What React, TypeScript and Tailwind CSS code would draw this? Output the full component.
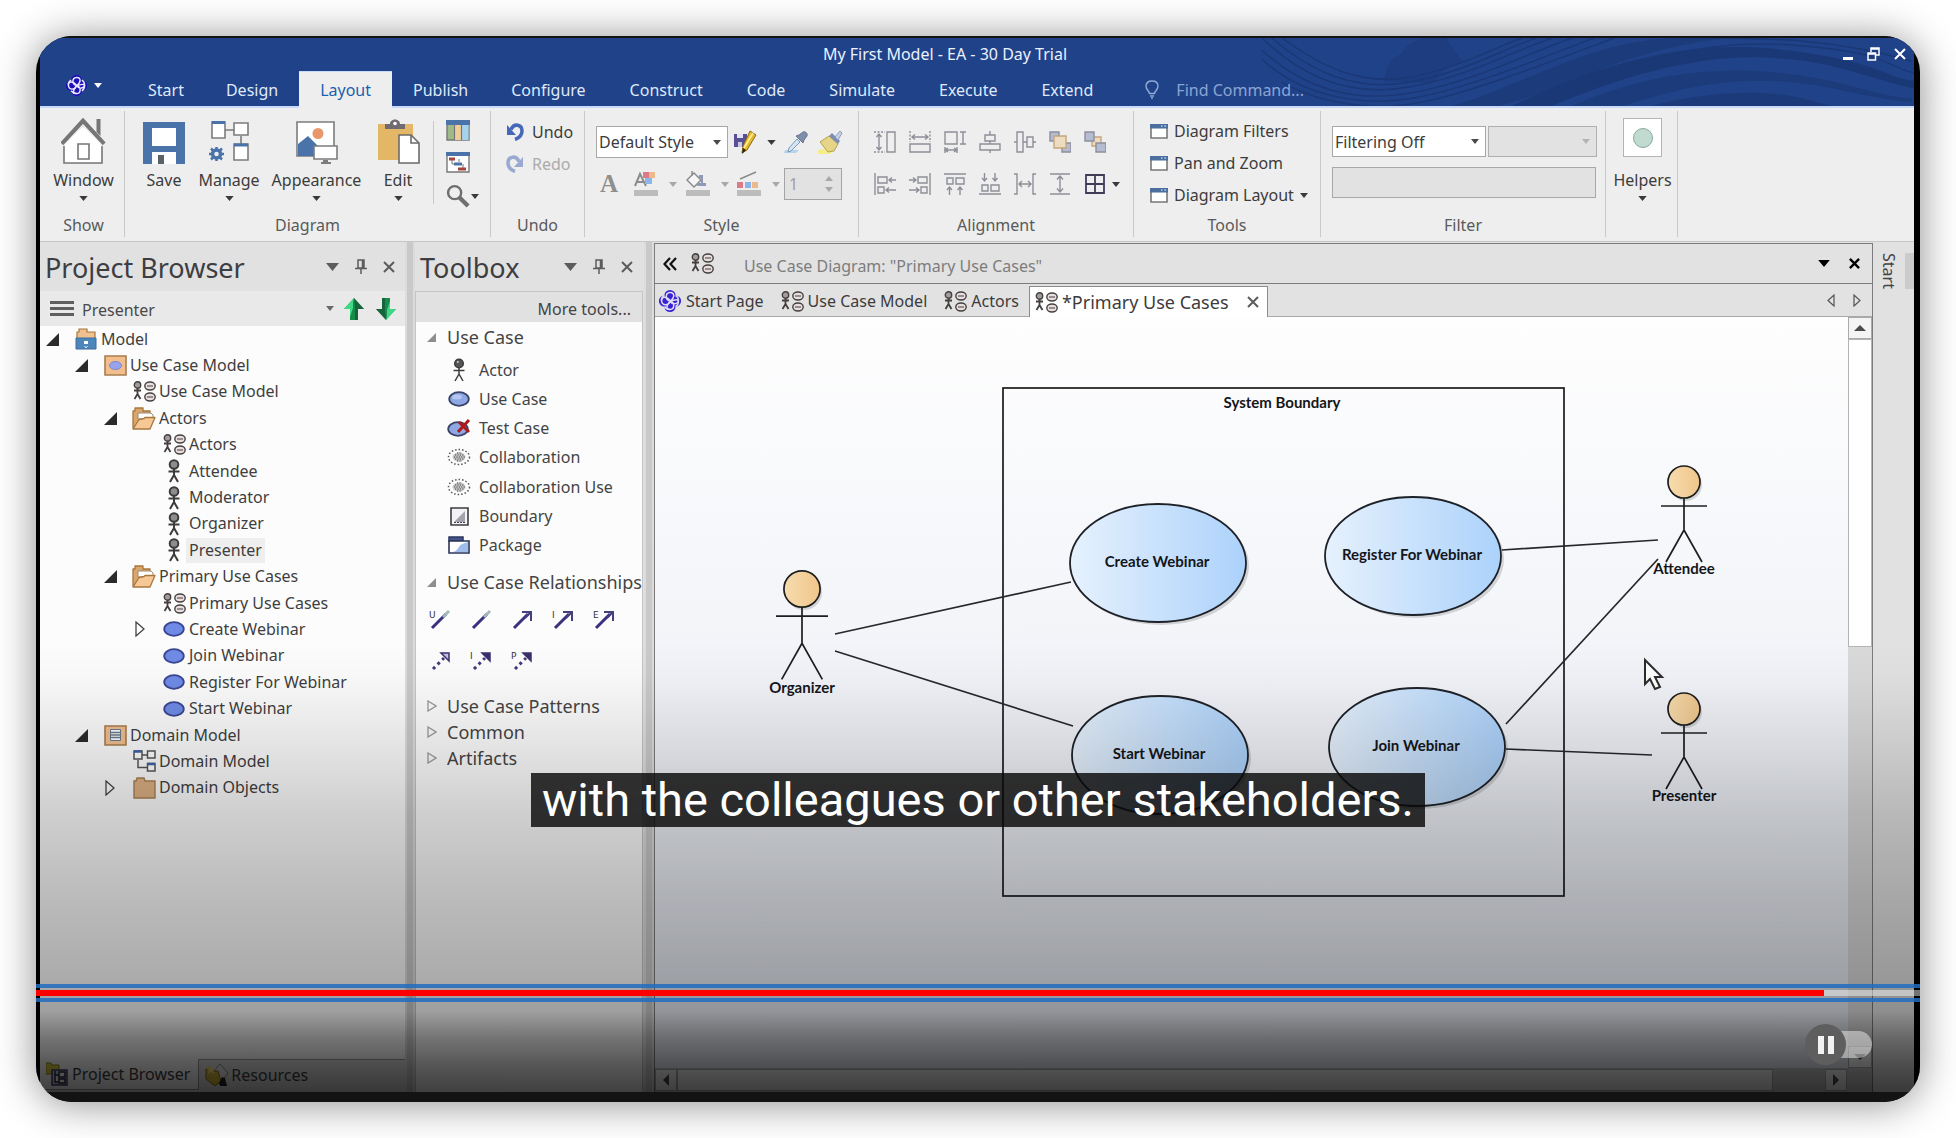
import React from 'react';

type Kids = { children?: React.ReactNode };

/* ---------- small shared glyphs ---------- */

const Caret = ({ className = 'text-[#3a3a3a]', w = 9 }: { className?: string; w?: number }) => (
  <svg width={w} height={Math.round(w * 0.6)} viewBox="0 0 10 6" className={`shrink-0 ${className}`}>
    <path d="M0 0h10L5 6z" fill="currentColor" />
  </svg>
);

const Pin = () => (
  <svg width="12" height="16" viewBox="0 0 12 16" fill="none" stroke="#5c5c5c" strokeWidth="1.5">
    <path d="M3 1h6v8H3zM7.5 1v8M0 9.5h12M6 10v5" />
  </svg>
);

const Cross = ({ size = 12, color = '#5c5c5c', width = 2 }: { size?: number; color?: string; width?: number }) => (
  <svg width={size} height={size} viewBox="0 0 12 12" stroke={color} strokeWidth={width}>
    <path d="M1 1l10 10M11 1L1 11" />
  </svg>
);

const Knot = ({ size, glow }: { size: number; glow?: boolean }) => (
  <svg width={size} height={size} viewBox="0 0 24 24" className="shrink-0">
    <g fill={glow ? '#1d10b8' : '#3a22d0'}>
      <circle cx="12" cy="6.5" r="5.6" />
      <circle cx="6.5" cy="12" r="5.6" />
      <circle cx="17.5" cy="12" r="5.6" />
      <circle cx="12" cy="17.5" r="5.6" />
      <circle cx="12" cy="12" r="7.5" />
    </g>
    <g fill="none" stroke={glow ? '#e8e6ff' : '#dcdcf4'} strokeWidth="1.5">
      <path d="M12 12C7 11 7 4 12 3.600S17 9 12 12c-1 5-8 5-8.400 0S9 7 12 12c5-1 8.400-2 8.400 0S15 17 12 12c-3 4-5 8.400 0 8.400S17 13 12 12" />
      <path d="M6.500 6.500C4 8 3 10 3.600 12M17.500 6.500c2 1 3 3 2.900 5.500M6.500 17.500c2 3 4 3 5.500 2.900M17.500 17.500c2-1 3-3 2.900-5.500" />
    </g>
  </svg>
);

const UseCaseDiagramIcon = () => (
  <svg width="23" height="21" viewBox="0 0 23 21" fill="none" stroke="#453f3f" strokeWidth="1.4" className="shrink-0">
    <circle cx="4.500" cy="4" r="3.200" fill="#a09c9c" />
    <path d="M4.500 7v6M1 9.500h7M4.500 13L1.500 18M4.500 13l3 5" strokeWidth="1.800" />
    <ellipse cx="17" cy="5" rx="5.200" ry="4" fill="#e9dede" />
    <ellipse cx="17" cy="16" rx="5.200" ry="4" fill="#e9dede" />
    <path d="M14 5h6M14 16h6" strokeWidth="1.200" />
  </svg>
);

const ActorIcon = ({ dark }: { dark?: boolean }) => (
  <svg width="14" height="24" viewBox="0 0 14 24" fill="none" stroke="#3c3c3c" strokeWidth={dark ? 1.5 : 2} className="shrink-0">
    <circle cx="7" cy="5.500" r="4.300" fill={dark ? '#555' : '#8d8d8d'} />
    {dark && <circle cx="5.800" cy="4" r="1" fill="#ccc" stroke="none" />}
    <path d="M7 10v6M1.500 12.500h11M7 16l-4 7M7 16l4 7" />
  </svg>
);

const Oval = ({ light }: { light?: boolean }) => (
  <svg width="22" height="16" viewBox="0 0 22 16" className="shrink-0">
    <ellipse cx="11" cy="8" rx="9.800" ry="6.800" fill={light ? '#8fa8e4' : '#6f8be6'} stroke={light ? '#3b4468' : '#3a4590'} strokeWidth="1.800" />
    {light && <ellipse cx="9" cy="6" rx="5" ry="2.500" fill="#b4c6f2" />}
  </svg>
);

const RootIcon = () => (
  <svg width="22" height="22" viewBox="0 0 22 22" className="shrink-0">
    <path d="M2 11V4h2V1h8v3h8v7z" fill="#efc18f" stroke="#a8773e" strokeWidth="1.200" />
    <path d="M1 10h20v11H1z" fill="#4d86ba" stroke="#3a6c9c" />
    <path d="M9 13h4v3H9z" fill="#fff" />
    <path d="M9.500 18l1.500 2 1.500-2" stroke="#dce9f5" fill="none" />
  </svg>
);

const ModelBox = ({ kind }: { kind: 'oval' | 'class' }) => (
  <svg width="23" height="21" viewBox="0 0 23 21" className="shrink-0">
    <path d="M1 1h21v19H1z" fill="#f2be8e" stroke="#a87d50" strokeWidth="1.600" />
    {kind === 'oval' ? (
      <ellipse cx="11.500" cy="10.500" rx="6" ry="4" fill="#97a3ec" stroke="#7c87cf" />
    ) : (
      <g stroke="#6a7b8c" fill="#fff">
        <path d="M6.500 4.500h10v11h-10z" />
        <path d="M6.500 7.500h10M6.500 10h10M6.500 12.500h10" strokeWidth="1.400" />
      </g>
    )}
  </svg>
);

const OpenFolder = () => (
  <svg width="24" height="23" viewBox="0 0 24 23" strokeLinejoin="round" className="shrink-0">
    <path d="M1 21V4h2V1h8v3h7v6L14 21z" fill="#dba66c" stroke="#a8773e" strokeWidth="1.300" />
    <path d="M6 6h13l2 2v4H6z" fill="#fff" stroke="#9b8a74" />
    <path d="M1 22L7 12.500l5-1 1-1h10L18 22z" fill="#f5c896" stroke="#a8773e" strokeWidth="1.300" />
  </svg>
);

const ClosedFolder = () => (
  <svg width="23" height="22" viewBox="0 0 23 22" className="shrink-0">
    <path d="M1 21V4h2l1-3h7l1 3h10v17z" fill="#dcb083" stroke="#a88052" strokeWidth="1.400" />
  </svg>
);

const ClassDiagram = () => (
  <svg width="23" height="22" viewBox="0 0 23 22" fill="#fff" stroke="#555" strokeWidth="1.500" className="shrink-0">
    <path d="M8 5h6M5 10v7.500h9" fill="none" />
    <path d="M1 1h8v8H1zM14.500 1h7.500v7h-7.500zM14.500 13.500h7.500v7.500h-7.500z" />
    <path d="M1 1.500h8M14.500 14h7.500" stroke="#3f62a8" strokeWidth="2.500" />
  </svg>
);

/* ---------- title bar ---------- */

const ribbonTabs = ['Start', 'Design', 'Layout', 'Publish', 'Configure', 'Construct', 'Code', 'Simulate', 'Execute', 'Extend'];

const Waves = () => (
  <svg className="pointer-events-none absolute top-0 right-0 h-full w-[652px]" viewBox="0 0 652 70" preserveAspectRatio="none" fill="none" stroke="#1b3876">
    <path d="M122 45C124 28 130 20 140 16C146 4 158 0 166 0h18c6 8 10 18 18 24l-14 4c-10 4-8 12-18 18z" fill="#1d3d80" stroke="none" />
    <g strokeWidth="1.500">
      <path d="M0 0C40 40 90 62 150 50S250 14 290 0" />
      <path d="M10 0C50 36 95 56 150 45S240 12 274 0" />
      <path d="M-5 8C40 52 90 68 152 56S270 14 310 0" />
      <path d="M20 0C60 30 100 50 150 40S236 8 260 0" />
      <path d="M0 22C40 60 100 72 156 61S290 16 332 0" />
      <path d="M20 46C60 68 110 76 160 66S300 20 352 0" />
    </g>
    <path d="M190 70C260 50 330 0 420 0L470 0C360 10 300 56 236 70z" fill="#1c3b7b" stroke="none" />
    <path d="M250 70C330 30 420 0 520 12S620 40 652 44v8C600 40 570 22 500 20S360 40 290 70z" fill="#1b3876" stroke="none" />
    <path d="M310 70C380 38 450 28 520 36s90 24 130 26v4c-60-6-90-22-150-22S400 58 360 70z" fill="#1c3b7b" stroke="none" />
    <path d="M390 70c50-14 110-18 150-8l30 8z" fill="#1c3a79" stroke="none" />
    <path d="M300 64C370 20 450 0 540 8s80 20 112 28M420 0c90 0 150 0 230 24" strokeWidth="1.500" />
  </svg>
);

const TitleBar = () => (
  <header className="relative border-b-2 border-[#c8dafa] bg-[#204289] text-[#dfe9fb]">
    <Waves />
    <div className="relative flex h-[33px] items-center">
      <div className="flex-1" />
      <h1 className="pb-[2px] text-[16px] text-[#eaf1ff]">My First Model - EA - 30 Day Trial</h1>
      <div className="mr-16 flex-1" />
      <div className="absolute right-2 flex items-center gap-[14px] pb-[2px]">
        <button aria-label="Minimize" className="flex h-5 w-[10px] items-end pb-1"><span className="block h-[3px] w-[10px] bg-white" /></button>
        <button aria-label="Restore">
          <svg width="13" height="14" viewBox="0 0 13 14" fill="none" stroke="#fff" strokeWidth="1.500">
            <path d="M4 5V1h8v7H9M4 2h8" /><path d="M1 6h7.500v7H1zM1 7h7.500" />
          </svg>
        </button>
        <button aria-label="Close"><Cross color="#fff" width={2} /></button>
      </div>
    </div>
    <nav className="relative flex h-[35px] items-center text-[16px]">
      <button aria-label="Application menu" className="flex w-[87px] items-center gap-[6px] pb-[6px] pl-[25px]">
        <Knot size={23} glow />
        <Caret className="text-white" w={8} />
      </button>
      {ribbonTabs.map((t, i) => (
        <button
          key={t}
          className={t === 'Layout'
            ? '-mb-[2px] h-[37px] border-t border-[#c8dafa] bg-[#eeeeee] px-[21px] text-[#1b5fae]'
            : `h-full pt-[2px] ${i > 3 ? 'px-[22px]' : 'px-[21px]'}`}
        >
          {t}
        </button>
      ))}
      <label className="ml-[30px] flex items-center gap-[17px] pt-[2px]">
        <svg width="14" height="19" viewBox="0 0 14 19" fill="none" stroke="#8fa9d6" strokeWidth="1.400">
          <path d="M4.500 13.500c0-2-3.500-4-3.500-7.300C1 3 3.500 1 7 1s6 2 6 5.200c0 3.300-3.500 5.300-3.500 7.300zM5 16h4M6 18h2" />
        </svg>
        <input aria-label="Find Command" placeholder="Find Command..." className="w-40 bg-transparent outline-none placeholder:text-[#8da5d2]" />
      </label>
    </nav>
  </header>
);

/* ---------- ribbon ---------- */

const Group = ({ label, className = '', children }: Kids & { label: string; className?: string }) => (
  <section className={`flex shrink-0 flex-col border-r border-[#c9c9c9] ${className}`}>
    <div className="flex-1">{children}</div>
    <h2 className="h-[23px] text-center text-[16px] leading-[22px] text-[#5a5a5a]">{label}</h2>
  </section>
);

const BigButton = ({ label, caret = true, className = '', children }: Kids & { label: string; caret?: boolean; className?: string }) => (
  <button className={`flex flex-col items-center pt-[7px] ${className}`}>
    <span className="flex h-[46px] items-end justify-center">{children}</span>
    <span className="mt-1 h-6 text-[16px] leading-6 text-[#3c3c3c]">{label}</span>
    <span className="flex h-3 items-center">{caret && <Caret />}</span>
  </button>
);

const House = () => (
  <svg width="46" height="46" viewBox="0 0 46 46">
    <path d="M3 26L22 7l19 19v19H3z" fill="#fff" stroke="#767676" strokeWidth="1.600" />
    <path d="M35.500 1h4v17l-4-4z" fill="#767676" />
    <path d="M1 26L22 3l21 23" fill="none" stroke="#767676" strokeWidth="4.500" />
    <path d="M2.500 28L22 7l19.500 21" fill="none" stroke="#f4f4f4" strokeWidth="1.500" />
    <path d="M17 26h11v15H17z" fill="#fff" stroke="#767676" strokeWidth="1.600" />
  </svg>
);
const SaveIcon = () => (
  <svg width="42" height="42" viewBox="0 0 42 42">
    <path d="M0 0h42v42H0z" fill="#4a74a9" />
    <path d="M9 6h24v18H9zM9 30h24v12H9z" fill="#fff" />
    <path d="M15 33h6v9h-6z" fill="#5a6268" />
  </svg>
);
const ManageIcon = () => (
  <svg width="42" height="44" viewBox="0 0 42 44" fill="#fff" stroke="#7c7c7c" strokeWidth="1.600">
    <path d="M16 10h10M33 16v8" fill="none" />
    <path d="M4 2h13v16H4zM26 3h14v12H26zM26 24h14v16H26z" />
    <path d="M4 2.500h13M26 25h14" stroke="#4a74a9" strokeWidth="3" />
    <circle cx="8.500" cy="34" r="4" stroke="#4a74a9" strokeWidth="3.500" fill="#eee" />
    <path d="M8.500 27v3M8.500 38v3M1 34h3M13 34h3M3 28.500l2.500 2.500M11.500 37l2.500 2.500M14 28.500L11.500 31M5.500 37L3 39.500" stroke="#4a74a9" strokeWidth="2.500" />
  </svg>
);
const AppearanceIcon = () => (
  <svg width="42" height="44" viewBox="0 0 42 44">
    <path d="M1 2h37v34H1z" fill="#fff" stroke="#7c7c7c" strokeWidth="1.600" />
    <circle cx="22" cy="13.500" r="5.500" fill="#e8976a" />
    <path d="M2 24l10-8 10 10v10H2z" fill="#4a74a9" />
    <path d="M18 26h23v13H18z" fill="#fff" stroke="#7c7c7c" strokeWidth="1.600" />
    <path d="M27 40h5v2h3v2H25v-2h2z" fill="#7c7c7c" />
  </svg>
);
const EditIcon = () => (
  <svg width="43" height="46" viewBox="0 0 43 46">
    <path d="M1 6h35v36H1z" fill="#e4b766" />
    <path d="M8 11V6h5c0-6 10-6 10 0h5v5z" fill="#6f6b70" />
    <circle cx="18" cy="5.500" r="1.800" fill="#fff" />
    <path d="M22 17h12l8 8v20H22z" fill="#fff" stroke="#6a6a6a" strokeWidth="1.600" />
    <path d="M34 17v8h8" fill="none" stroke="#6a6a6a" strokeWidth="1.600" />
  </svg>
);
const GridIcon = () => (
  <svg width="24" height="21" viewBox="0 0 24 21">
    <path d="M1 1h22v19H1z" fill="#9fb98a" stroke="#777" strokeWidth="1.400" />
    <path d="M8.500 5h7v15h-7z" fill="#f0cd98" /><path d="M15.500 5h7v15h-7z" fill="#a4d3ee" />
    <path d="M8.500 5v15M15.500 5v15" stroke="#777" strokeWidth="1.200" />
    <path d="M0 0h24v5H0z" fill="#4a74a9" />
  </svg>
);
const ChartIcon = () => (
  <svg width="24" height="21" viewBox="0 0 24 21">
    <path d="M1 1h22v19H1z" fill="#fff" stroke="#777" strokeWidth="1.400" />
    <path d="M0 0h24v4H0z" fill="#4a74a9" />
    <path d="M3 7h6M12 17h8" stroke="#a8443c" strokeWidth="3" /><path d="M8 12h8" stroke="#4a74a9" strokeWidth="3" />
    <path d="M6 8v4h3M13 10v-3M17 12v4" stroke="#777" fill="none" />
  </svg>
);
const UndoIcon = ({ flip }: { flip?: boolean }) => (
  <svg width="18" height="18" viewBox="0 0 18 18" className={flip ? '-scale-x-100 opacity-50' : ''}>
    <path d="M5 6.500C8 0 16 1 16 8c0 5-3 7-7 8.500" fill="none" stroke="#4668b8" strokeWidth="3.500" />
    <path d="M1 2v10h9z" fill="#4668b8" />
  </svg>
);

const StylePencil = () => (
  <svg width="23" height="24" viewBox="0 0 23 24">
    <path d="M0 4h13v13H0z" fill="#575095" /><path d="M3 4h6v4H3z" fill="#e4e2f4" /><path d="M4 12h4v5H4z" fill="#c9c6e6" />
    <path d="M16 1l6 4-9 15-5 3 1-7z" fill="#e5b82e" stroke="#8a6a14" />
    <path d="M19 3L10 18" stroke="#fdf0a0" strokeWidth="1.500" /><path d="M9 18l3 2-4 4z" fill="#2c2414" />
  </svg>
);
const Dropper = () => (
  <svg width="24" height="22" viewBox="0 0 24 22">
    <path d="M1 19h14l-3 3H0z" fill="#b4d3ec" />
    <path d="M13 8l3 3-9 9-3 1 1-4z" fill="#d4e6f5" stroke="#7b99b6" />
    <path d="M12 5l7 7 1-3 3-4c1-3-2-5-4-4l-4 3z" fill="#7d8fab" stroke="#66768e" />
  </svg>
);
const Brush = () => (
  <svg width="25" height="24" viewBox="0 0 25 24">
    <path d="M0 20l10-2 6 2-4 4H0z" fill="#f2ee8c" />
    <path d="M2 12l9-6 9 8-4 7-6 1z" fill="#e6d588" stroke="#b8a24a" /><path d="M11 6l3-3 8 8-2 3z" fill="#7b8fb4" />
    <path d="M17 7l5-6 2 2-4 7z" fill="#c6d1e8" stroke="#8e9cbc" />
  </svg>
);
const ColorA = () => (
  <svg width="24" height="26" viewBox="0 0 24 26">
    <path d="M1 15L6 3l6 12M3 11h7" fill="none" stroke="#8c8c8c" strokeWidth="2" />
    <path d="M9 1h6v6H9z" fill="#dd7a88" /><path d="M15 1h6v6h-6z" fill="#ecb98c" /><path d="M11 7h7v6h-7z" fill="#8cb6e8" />
    <path d="M0 19h24v6H0z" fill="#bcbcbc" />
  </svg>
);
const Bucket = () => (
  <svg width="24" height="26" viewBox="0 0 24 26">
    <path d="M1 9l7-7 7 7-7 7zM6 0v5" fill="#f6f6f6" stroke="#8c8c8c" strokeWidth="1.500" />
    <path d="M13 4h4v8h3v3h-9v-3h4V7h-2z" fill="#8c9bb8" /><path d="M0 19h24v6H0z" fill="#bcbcbc" />
  </svg>
);
const LineColor = () => (
  <svg width="24" height="26" viewBox="0 0 24 26">
    <path d="M3 8L19 1" stroke="#8c8c8c" strokeWidth="1.500" />
    <path d="M0 11h6v6H0z" fill="#dd7a88" /><path d="M8 11h6v6H8z" fill="#8cb6e8" /><path d="M15 11h6v6h-6z" fill="#ecb98c" />
    <path d="M0 19h24v6H0z" fill="#bcbcbc" />
  </svg>
);

const alignPaths: { name: string; d: string; dash?: string; fill?: React.ReactNode }[] = [
  { name: 'Same height', d: 'M13 1h8v20h-8zM5 3v16M2.500 6L5 3l2.500 3M2.500 16L5 19l2.500-3', dash: 'M0 1h11M0 21h11' },
  { name: 'Same width', d: 'M1 13h20v8H1zM3 6h16M6 3.500L3 6l3 2.500M16 3.500L19 6l-3 2.500', dash: 'M1 0v11M21 0v11' },
  { name: 'Same size', d: 'M1 1h12v12H1zM16 1h6M16 13h6M19 1v12M1 16v6M13 16v6M1 19h12M4 17l-3 2 3 2M10 17l3 2-3 2' },
  { name: 'Center vertical', d: 'M6 4h10v6H6zM1 13h20v6H1zM11 0v4M11 10v3M11 19v3' },
  { name: 'Center horizontal', d: 'M3 1h6v20H3zM13 6h6v10h-6zM0 11h3M9 11h4M19 11h3' },
  { name: 'Bring forward', d: '', fill: <g stroke="#8e8e9c" fill="#b4bcd2"><path d="M1 1h9v9H1zM13 12h9v9h-9z" /><path d="M5 5h12v12H5z" fill="#eddcc0" stroke="#c4a77c" /></g> },
  { name: 'Send back', d: '', fill: <g stroke="#8e8e9c" fill="#b4bcd2"><path d="M8 6h9v9H8z" fill="#eddcc0" stroke="#c4a77c" /><path d="M1 1h9v9H1zM12 12h10v9H12z" /></g> },
  { name: 'Align left', d: 'M1 0v22M4 4h9v6H4zM4 14h6v6H4zM15 7h7M18 4.500L15 7l3 2.500M12 17h10M15 14.500L12 17l3 2.500' },
  { name: 'Align right', d: 'M21 0v22M9 4h9v6H9zM12 14h6v6h-6zM0 7h7M4 4.500L7 7l-3 2.500M0 17h10M7 14.500l3 2.500-3 2.500' },
  { name: 'Align top', d: 'M0 1h22M3 5h6v6H3zM12 5h8v6h-8zM5.500 14v8M3 17l2.500-3L8 17M16 14v8M13.500 17l2.500-3 2.500 3' },
  { name: 'Align bottom', d: 'M0 21h22M3 12h6v6H3zM12 12h8v6h-8zM5.500 0v8M3 5l2.500 3L8 5M16 0v8M13.500 5L16 8l2.500-3' },
  { name: 'Space across', d: 'M0 1h3v20H0M22 1h-3v20h3M5 11h12M8 8l-3 3 3 3M14 8l3 3-3 3' },
  { name: 'Space down', d: 'M1 1h20M1 21h20M11 3v16M8 6.500L11 3l3 3.500M8 15.500L11 19l3-3.500' },
];

const AlignButton = ({ i }: { i: number }) => {
  const a = alignPaths[i];
  return (
    <button aria-label={a.name} className="flex w-[35px] justify-center">
      <svg width="22" height="22" viewBox="0 0 22 22" fill="none" stroke="#8e8e98" strokeWidth="1.400">
        <path d={a.d} />
        {a.dash && <path d={a.dash} strokeDasharray="2 1.500" />}
        {a.fill}
      </svg>
    </button>
  );
};

const WindowIcon = () => (
  <svg width="18" height="15" viewBox="0 0 18 15">
    <path d="M1 1h16v13H1z" fill="#fff" stroke="#777" strokeWidth="1.600" />
    <path d="M0 0h18v4.500H0z" fill="#4a6f9f" /><path d="M11 2h1.500M14.500 2H16" stroke="#fff" />
  </svg>
);

const Select = ({ label, value, className, disabled }: { label: string; value: string; className: string; disabled?: boolean }) => (
  <div className={`relative flex items-center border text-[16px] ${className} ${disabled ? 'border-[#b0b0b0] bg-[#e2e2e2]' : 'border-[#a8a8a8] bg-white'}`}>
    <select aria-label={label} disabled={disabled} className="h-full w-full appearance-none bg-transparent pl-[2px] text-[#3c3c3c] outline-none">
      <option>{value}</option>
    </select>
    <span className="pointer-events-none absolute right-[6px]"><Caret w={8} className={disabled ? 'text-[#b4b4b4]' : 'text-[#4a4a4a]'} /></span>
  </div>
);

const Ribbon = () => (
  <div className="flex h-[134px] border-b border-[#c6c6c6] bg-[#eeeeee] pt-[3px] pb-1">
    <Group label="Show" className="w-[85px] pl-[3px]">
      <BigButton label="Window" className="mx-auto"><House /></BigButton>
    </Group>
    <Group label="Diagram" className="w-[366px]">
      <div className="flex pl-[14px]">
        <BigButton label="Save" caret={false} className="w-[50px]"><SaveIcon /></BigButton>
        <BigButton label="Manage" className="ml-2 w-16"><ManageIcon /></BigButton>
        <BigButton label="Appearance" className="ml-2 w-[95px]"><AppearanceIcon /></BigButton>
        <BigButton label="Edit" className="ml-[6px] w-14"><EditIcon /></BigButton>
        <div className="mt-[10px] ml-[7px] h-[83px] border-l border-[#c9c9c9]" />
        <div className="ml-3 flex flex-col gap-[11px] pt-[9px]">
          <button aria-label="Diagram grid"><GridIcon /></button>
          <button aria-label="Gantt view"><ChartIcon /></button>
          <button aria-label="Zoom" className="flex items-center gap-[1px]">
            <svg width="24" height="24" viewBox="0 0 25 25" fill="none" stroke="#6e6e6e">
              <circle cx="9" cy="9" r="6.800" strokeWidth="2.500" /><path d="M14 14l9 9" strokeWidth="4.500" />
            </svg>
            <Caret w={8} />
          </button>
        </div>
      </div>
    </Group>
    <Group label="Undo" className="w-[94px]">
      <div className="flex flex-col gap-2 pt-[9px] pl-[15px] text-[16px] leading-6">
        <button className="flex items-center gap-2 text-[#3c3c3c]"><UndoIcon />Undo</button>
        <button disabled className="flex items-center gap-2 text-[#ababab]"><UndoIcon flip />Redo</button>
      </div>
    </Group>
    <Group label="Style" className="w-[274px]">
      <div className="flex items-center pt-[15px] pl-[11px]">
        <Select label="Diagram style" value="Default Style" className="h-8 w-[132px]" />
        <button aria-label="Save style" className="ml-[6px] flex items-center gap-[10px]"><StylePencil /><Caret /></button>
        <button aria-label="Pick style" className="ml-2"><Dropper /></button>
        <button aria-label="Apply style" className="ml-[10px]"><Brush /></button>
      </div>
      <div className="mt-[10px] flex items-center pl-[14px]">
        <button aria-label="Font" className="w-5 font-['Liberation_Serif'] text-[25px] leading-8 font-bold text-[#8e8e8e]">A</button>
        <button aria-label="Font color" className="ml-[15px] flex items-center gap-[11px]"><ColorA /><Caret w={8} className="text-[#a8a8a8]" /></button>
        <button aria-label="Fill color" className="ml-[9px] flex items-center gap-[11px]"><Bucket /><Caret w={8} className="text-[#a8a8a8]" /></button>
        <button aria-label="Line color" className="ml-[8px] flex items-center gap-[11px]"><LineColor /><Caret w={8} className="text-[#a8a8a8]" /></button>
        <div className="ml-1 flex h-8 w-[58px] items-center justify-between border border-[#a4a4a4] bg-[#e2e2e2] pr-2 pl-1">
          <input aria-label="Line width" disabled defaultValue="1" className="w-5 bg-transparent text-[16px] text-[#a0a0a0]" />
          <span className="flex flex-col gap-[6px]"><Caret w={8} className="rotate-180 text-[#a8a8a8]" /><Caret w={8} className="text-[#a8a8a8]" /></span>
        </div>
      </div>
    </Group>
    <Group label="Alignment" className="w-[275px]">
      <div className="flex pt-5 pl-2">{[0, 1, 2, 3, 4, 5, 6].map((i) => <AlignButton key={i} i={i} />)}</div>
      <div className="mt-5 flex items-center pl-2">
        {[7, 8, 9, 10, 11, 12].map((i) => <AlignButton key={i} i={i} />)}
        <button aria-label="Auto layout" className="flex items-center gap-[7px] pl-2">
          <svg width="20" height="20" viewBox="0 0 20 20" fill="none" stroke="#3f3c58" strokeWidth="1.800"><path d="M1 1h18v18H1zM10 1v18M1 10h18" /></svg>
          <Caret w={8} />
        </button>
      </div>
    </Group>
    <Group label="Tools" className="w-[187px]">
      <div className="flex flex-col gap-2 pt-2 pl-[16px] text-[16px] leading-6 text-[#3c3c3c]">
        <button className="flex items-center gap-[6px]"><WindowIcon />Diagram Filters</button>
        <button className="flex items-center gap-[6px]"><WindowIcon />Pan and Zoom</button>
        <button className="flex items-center gap-[6px]"><WindowIcon />Diagram Layout<Caret w={8} /></button>
      </div>
    </Group>
    <Group label="Filter" className="w-[285px]">
      <div className="flex gap-[2px] pt-[15px] pl-[11px]">
        <Select label="Filtering" value="Filtering Off" className="h-[31px] w-[154px]" />
        <Select label="Filter set" value="" disabled className="h-[31px] w-[109px]" />
      </div>
      <input aria-label="Filter text" disabled className="mt-[10px] ml-[11px] h-[31px] w-[264px] border border-[#a8a8a8] bg-[#e2e2e2]" />
    </Group>
    <Group label="" className="w-[72px] pl-[2px]">
      <BigButton label="Helpers" className="mx-auto">
        <span className="mb-[7px] flex h-[39px] w-[39px] items-center justify-center border border-[#b4b4b4] bg-white">
          <span className="h-5 w-5 rounded-full border border-[#8aa79c] bg-[#c2dbd1]" />
        </span>
      </BigButton>
    </Group>
  </div>
);

/* ---------- docked panels ---------- */

const PanelHead = ({ title }: { title: string }) => (
  <div className="flex h-[49px] shrink-0 items-center bg-[#e1e1e1] pr-[10px] pl-[5px]">
    <h2 className="flex-1 pt-[3px] text-[27px] text-[#3d3d42]">{title}</h2>
    <div className="flex items-center gap-4 pt-px">
      <button aria-label={`${title} options`}><Caret w={13} className="text-[#5c5c5c]" /></button>
      <button aria-label={`Pin ${title}`}><Pin /></button>
      <button aria-label={`Close ${title}`}><Cross size={12} /></button>
    </div>
  </div>
);

const Arrow = ({ down }: { down?: boolean }) => (
  <svg width="20" height="22" viewBox="0 0 20 22" className={down ? 'rotate-180' : ''}>
    <path d="M10 0l10 11h-6v11H6V11H0z" fill="#168c4a" />
    <path d="M10 0L0 11h6v8l3-9V4z" fill="#3ed886" />
    <path d="M10 0l10 11h-6v11h-3V8z" fill="#174a34" opacity=".6" />
  </svg>
);

type Node = { level: 0 | 1 | 2 | 3; text: string; icon: React.ReactNode; state?: 'open' | 'closed'; selected?: boolean };

const tree: Node[] = [
  { level: 0, text: 'Model', icon: <RootIcon />, state: 'open' },
  { level: 1, text: 'Use Case Model', icon: <ModelBox kind="oval" />, state: 'open' },
  { level: 2, text: 'Use Case Model', icon: <UseCaseDiagramIcon /> },
  { level: 2, text: 'Actors', icon: <OpenFolder />, state: 'open' },
  { level: 3, text: 'Actors', icon: <UseCaseDiagramIcon /> },
  { level: 3, text: 'Attendee', icon: <ActorIcon /> },
  { level: 3, text: 'Moderator', icon: <ActorIcon /> },
  { level: 3, text: 'Organizer', icon: <ActorIcon /> },
  { level: 3, text: 'Presenter', icon: <ActorIcon />, selected: true },
  { level: 2, text: 'Primary Use Cases', icon: <OpenFolder />, state: 'open' },
  { level: 3, text: 'Primary Use Cases', icon: <UseCaseDiagramIcon /> },
  { level: 3, text: 'Create Webinar', icon: <Oval />, state: 'closed' },
  { level: 3, text: 'Join Webinar', icon: <Oval /> },
  { level: 3, text: 'Register For Webinar', icon: <Oval /> },
  { level: 3, text: 'Start Webinar', icon: <Oval /> },
  { level: 1, text: 'Domain Model', icon: <ModelBox kind="class" />, state: 'open' },
  { level: 2, text: 'Domain Model', icon: <ClassDiagram /> },
  { level: 2, text: 'Domain Objects', icon: <ClosedFolder />, state: 'closed' },
];

const indent = ['pl-0', 'pl-[29px]', 'pl-[58px]', 'pl-[88px]'];

const Twisty = ({ state }: { state?: 'open' | 'closed' }) => (
  <span className="flex w-6 shrink-0 justify-center">
    {state === 'open' && <svg width="13" height="13" viewBox="0 0 13 13"><path d="M13 0v13H0z" fill="#2b2b2b" /></svg>}
    {state === 'closed' && <svg width="10" height="16" viewBox="0 0 10 16"><path d="M1 1l8 7-8 7z" fill="#fff" stroke="#444" strokeWidth="1.300" /></svg>}
  </span>
);

const ProjectBrowser = () => (
  <aside className="flex w-[365px] shrink-0 flex-col bg-[#fcfcfc]">
    <PanelHead title="Project Browser" />
    <div className="flex h-[35px] shrink-0 items-center bg-[#e9e9e9] pr-[9px] pl-[10px] text-[16px] text-[#4a4a4a]">
      <button aria-label="Browser menu" className="flex flex-col gap-[3px]">
        <span className="block h-[3px] w-6 bg-[#5f5f5f]" /><span className="block h-[3px] w-6 bg-[#5f5f5f]" /><span className="block h-[3px] w-6 bg-[#5f5f5f]" />
      </button>
      <span className="flex-1 pt-[2px] pl-2">Presenter</span>
      <button aria-label="Select context"><Caret w={8} className="text-[#6a6a6a]" /></button>
      <button aria-label="Move up" className="ml-[10px]"><Arrow /></button>
      <button aria-label="Move down" className="ml-3"><Arrow down /></button>
    </div>
    <ul className="flex h-[475px] shrink-0 flex-col text-[16px] text-[#3f3f3f]">
      {tree.map((n, i) => (
        <li key={i} className={`flex min-h-0 flex-1 items-center ${indent[n.level]}`}>
          <Twisty state={n.state} />
          <span className="ml-[10px] flex w-6 shrink-0 justify-center">{n.icon}</span>
          <button className={`px-[3px] leading-[25px] ${n.selected ? 'bg-[#eeeeee]' : ''}`}>{n.text}</button>
        </li>
      ))}
    </ul>
    <div className="flex-1" />
    <div className="flex h-[33px] shrink-0 bg-[#dedede] pb-[2px] text-[16px] text-[#3c3c3c]">
      <button className="flex items-center gap-1 border-r border-b border-[#999] bg-[#fcfcfc] pr-2 pl-[6px]">
        <svg width="22" height="24" viewBox="0 0 22 24">
          <path d="M0 1h5l1 2h7v9H0z" fill="#d8cc3c" stroke="#8c8424" />
          <path d="M6 8h15v15H6z" fill="#c4c6dc" stroke="#3c3e66" strokeWidth="1.500" />
          <path d="M9 9v11h4M9 13h4M13 10h6v5h-6zM13 17h6v4h-6z" fill="#fff" stroke="#26263c" strokeWidth="1.500" />
        </svg>
        Project Browser
      </button>
      <button className="flex flex-1 items-center gap-[2px] border-t border-[#999] pl-[6px]">
        <svg width="24" height="24" viewBox="0 0 24 24">
          <path d="M9 8l6-7 8 9-7 9z" fill="#e8e8f0" stroke="#888" />
          <path d="M1 6l4-2 3 4h5l3 10-6 5-9-7z" fill="#d8b83c" stroke="#8a7020" />
          <path d="M6 2l1 4 4-1-3 3 2 3-4-2-3 2 1-4-3-2 4-1z" fill="#ffe978" />
          <path d="M14 20l3-6 3 1 2 8h-7z" fill="#222" />
        </svg>
        Resources
      </button>
    </div>
  </aside>
);

const StippledOval = () => (
  <svg width="24" height="18" viewBox="0 0 24 18">
    <ellipse cx="12" cy="9" rx="10.500" ry="7.500" fill="none" stroke="#555" strokeWidth="1.500" strokeDasharray="1.500 2" />
    <ellipse cx="12" cy="9" rx="6.500" ry="4.500" fill="#c8c8c8" />
    <g stroke="#444" strokeWidth="1.200" strokeDasharray="1.200 1.200"><path d="M8 7h9M7 9h11M8 11h9M10 13h5M10 5h5" /></g>
  </svg>
);

const tools = [
  { name: 'Actor', icon: <ActorIcon dark /> },
  { name: 'Use Case', icon: <Oval light /> },
  { name: 'Test Case', icon: (
    <svg width="24" height="18" viewBox="0 0 24 18">
      <ellipse cx="11" cy="10" rx="9.800" ry="6.800" fill="#8fa8e4" stroke="#3b4468" strokeWidth="1.800" />
      <path d="M12 3l10 10M22 1L11 13" stroke="#b01818" strokeWidth="3" />
    </svg>) },
  { name: 'Collaboration', icon: <StippledOval /> },
  { name: 'Collaboration Use', icon: <StippledOval /> },
  { name: 'Boundary', icon: (
    <svg width="19" height="19" viewBox="0 0 19 19">
      <path d="M1 1h17v17H1z" fill="#f2f2f8" stroke="#3c3c3c" strokeWidth="1.600" />
      <path d="M15 4v11H4z" fill="#a4a4ae" /><path d="M4 15.500h12" stroke="#444" strokeDasharray="2 1" />
    </svg>) },
  { name: 'Package', icon: (
    <svg width="22" height="18" viewBox="0 0 22 18">
      <path d="M1 1h14v4H1z" fill="#45558c" stroke="#2b355c" strokeWidth="1.500" />
      <path d="M1 5h20v12H1z" fill="#fff" stroke="#2b355c" strokeWidth="1.600" /><path d="M20 6v10H4c6 0 6-6 10-8z" fill="#9fbdea" />
    </svg>) },
];

const ToolHead = ({ text, open, className = '' }: { text: string; open?: boolean; className?: string }) => (
  <button className={`flex h-[26px] w-full shrink-0 items-center overflow-hidden pl-[11px] text-[18px] whitespace-nowrap text-[#444] ${className}`}>
    <span className="flex w-5 shrink-0">
      {open
        ? <svg width="9" height="9" viewBox="0 0 9 9"><path d="M9 0v9H0z" fill="#8e8e8e" /></svg>
        : <svg width="10" height="12" viewBox="0 0 10 12"><path d="M1 1l8 5-8 5z" fill="none" stroke="#999" strokeWidth="1.300" /></svg>}
    </span>
    {text}
  </button>
);

const links: { name: string; tag?: string; kind: 'line' | 'arrow' | 'dash' }[] = [
  { name: 'Use', tag: 'U', kind: 'line' },
  { name: 'Associate', kind: 'line' },
  { name: 'Generalize', kind: 'arrow' },
  { name: 'Include', tag: 'I', kind: 'arrow' },
  { name: 'Extend', tag: 'E', kind: 'arrow' },
  { name: 'Realize', kind: 'dash' },
  { name: 'Invokes', tag: 'I', kind: 'dash' },
  { name: 'Precedes', tag: 'P', kind: 'dash' },
];

const LinkIcon = ({ tag, kind }: { tag?: string; kind: string }) => (
  <svg width="24" height="24" viewBox="0 0 24 24" fill="none">
    {tag && <text x="1" y="10" fontSize="9" fontFamily="DejaVu Sans" fill="#333">{tag}</text>}
    {kind === 'dash'
      ? <path d="M5 20L16 9" stroke="#433a7c" strokeWidth="3" strokeDasharray="3 3.500" />
      : <path d="M4 20L18 6" stroke="#3a3080" strokeWidth="3" />}
    {kind === 'line' && <path d="M15 9l6-6" stroke="#a4b8bc" strokeWidth="3" />}
    {kind === 'arrow' && <path d="M12 4h9v9M21 4l-6 6" stroke="#44407c" strokeWidth="2" />}
    {kind === 'dash' && <path d="M13 4h8v8z" stroke="#38306c" strokeWidth="1.500" fill={tag ? '#38306c' : '#c4c0e0'} />}
  </svg>
);

const Toolbox = () => (
  <aside className="mr-px flex w-[228px] shrink-0 flex-col bg-[#e1e1e1]">
    <PanelHead title="Toolbox" />
    <div className="flex min-h-0 flex-1 flex-col overflow-hidden border-x border-t border-[#c4c4c4] bg-[#fcfcfc]">
      <button className="h-[30px] shrink-0 bg-[#e1e1e1] pt-1 pr-[11px] text-right text-[16px] leading-6 text-[#444]">More tools...</button>
      <ToolHead text="Use Case" open className="mt-[2px]" />
      <ul className="mt-[5px] flex h-[205px] shrink-0 flex-col text-[16px] text-[#444]">
        {tools.map((t) => (
          <li key={t.name} className="flex flex-1 items-center">
            <button className="flex items-center pl-[31px]">
              <span className="mr-2 flex w-6 justify-center">{t.icon}</span>{t.name}
            </button>
          </li>
        ))}
      </ul>
      <ToolHead text="Use Case Relationships" open className="mt-[9px]" />
      <div className="mt-1 grid w-[217px] grid-cols-5 pl-3">
        {links.map((l) => (
          <button key={l.name} aria-label={l.name} className="flex h-[41px] items-center"><LinkIcon tag={l.tag} kind={l.kind} /></button>
        ))}
      </div>
      <ToolHead text="Use Case Patterns" className="mt-3" />
      <ToolHead text="Common" />
      <ToolHead text="Artifacts" />
    </div>
  </aside>
);

const Splitter = () => <div className="w-[10px] shrink-0 border-x-2 border-[#dcdcdc] bg-[#c9c9c9]" />;

/* ---------- diagram ---------- */

const UseCase = ({ x, y, text }: { x: number; y: number; text: string }) => (
  <g>
    <ellipse cx={x + 3} cy={y + 3} rx="88" ry="59" fill="#000" opacity=".14" />
    <ellipse cx={x} cy={y} rx="88" ry="59" fill="url(#blue)" stroke="#1e2228" strokeWidth="1.800" />
    <text x={x - 1} y={y + 4} textAnchor="middle">{text}</text>
  </g>
);

const Actor = ({ x, y, text, k = 1 }: { x: number; y: number; text: string; k?: number }) => (
  <g>
    <circle cx={x + 2} cy={y + 3} r={16 * k} fill="#000" opacity=".14" />
    <g stroke="#1e1e1e" strokeWidth="1.700" fill="none">
      <circle cx={x} cy={y} r={16 * k} fill="url(#tan)" />
      <path d={`M${x} ${y + 16 * k}v${32 * k}M${x - 23 * k} ${y + 24 * k}h${46 * k}M${x - 18 * k} ${y + 80 * k}L${x} ${y + 48 * k}L${x + 18 * k} ${y + 80 * k}`} />
    </g>
    <text x={x} y={y + 92 * k} textAnchor="middle">{text}</text>
  </g>
);

const Diagram = () => (
  <svg className="block h-full w-full font-['Lato']" fontSize="15" fontWeight="700" fill="#14161a">
    <defs>
      <linearGradient id="blue"><stop offset="0" stopColor="#e6f1fd" /><stop offset="1" stopColor="#acd2fb" /></linearGradient>
      <linearGradient id="tan"><stop offset="0" stopColor="#f6dcae" /><stop offset="1" stopColor="#f0c58b" /></linearGradient>
    </defs>
    <rect x="348" y="71" width="561" height="508" fill="none" stroke="#1a1a1a" strokeWidth="1.700" />
    <text x="627" y="91" textAnchor="middle">System Boundary</text>
    <path d="M180 317L416 265M180 334L418 409M847 233L1003 223M851 407L1003 242M851 432L997 438" stroke="#26282c" strokeWidth="1.700" />
    <UseCase x={503} y={246} text="Create Webinar" />
    <UseCase x={758} y={239} text="Register For Webinar" />
    <UseCase x={505} y={438} text="Start Webinar" />
    <UseCase x={762} y={430} text="Join Webinar" />
    <Actor x={147} y={272} k={1.13} text="Organizer" />
    <Actor x={1029} y={165} text="Attendee" />
    <Actor x={1029} y={392} text="Presenter" />
    <path d="M990 343v24l5-5 5 10 5-2-5-10h7z" fill="#fff" stroke="#2c2c2c" strokeWidth="2" />
  </svg>
);

const DocTab = ({ text, icon }: { text: string; icon: React.ReactNode }) => (
  <button className="flex h-full items-center gap-[4px] pt-[2px] pr-[17px]">{icon}{text}</button>
);

const ScrollButton = ({ label, d }: { label: string; d: string }) => (
  <button aria-label={label} className="flex h-[22px] w-full shrink-0 items-center justify-center border border-[#aaa] bg-[#f4f4f4]">
    <svg width="14" height="14" viewBox="0 0 14 14"><path d={d} fill="#4a4a4a" /></svg>
  </button>
);

const Editor = () => (
  <main className="mt-px flex min-w-0 flex-1 flex-col border-x border-t border-[#7c7c7c] bg-[#e2e2e2]">
    <div className="flex h-10 shrink-0 items-center border-b border-[#7c7c7c] pr-3 pl-[8px] text-[16px]">
      <button aria-label="Collapse">
        <svg width="14" height="14" viewBox="0 0 14 14" fill="none" stroke="#111" strokeWidth="2.200"><path d="M7 1L1.500 7 7 13M13 1L7.500 7 13 13" /></svg>
      </button>
      <span className="ml-[14px]"><UseCaseDiagramIcon /></span>
      <h2 className="ml-[30px] flex-1 pt-1 text-[#7d7d7d]">Use Case Diagram: "Primary Use Cases"</h2>
      <button aria-label="Window list"><Caret w={12} className="text-black" /></button>
      <button aria-label="Close view" className="ml-[19px]"><Cross size={11} color="#000" width={2.600} /></button>
    </div>
    <div className="flex h-[33px] shrink-0 items-center border-b border-[#a8a8a8] pl-[3px] text-[16px] text-[#3c3c3c]">
      <DocTab text="Start Page" icon={<Knot size={24} />} />
      <DocTab text="Use Case Model" icon={<UseCaseDiagramIcon />} />
      <div className="-mr-[7px] h-full"><DocTab text="Actors" icon={<UseCaseDiagramIcon />} /></div>
      <div className="-mb-px flex h-[31px] items-center gap-1 self-end border-x border-t border-[#8c8c8c] bg-white pr-2 pl-[5px] text-[18px]">
        <UseCaseDiagramIcon />
        <button>*Primary Use Cases</button>
        <button aria-label="Close tab" className="ml-[14px]"><Cross size={12} /></button>
      </div>
      <div className="flex-1" />
      <button aria-label="Previous tab"><svg width="8" height="13" viewBox="0 0 8 13"><path d="M7 1v11L1 6.500z" fill="none" stroke="#555" strokeWidth="1.200" /></svg></button>
      <button aria-label="Next tab" className="mr-[11px] ml-[18px]"><svg width="8" height="13" viewBox="0 0 8 13"><path d="M1 1v11l6-5.500z" fill="none" stroke="#555" strokeWidth="1.200" /></svg></button>
    </div>
    <div className="flex min-h-0 flex-1">
      <div className="min-w-0 flex-1 overflow-hidden bg-linear-to-b from-[#fefefe] via-[#f1f3f8] to-[#e6eaf3]"><Diagram /></div>
      <div className="flex w-6 shrink-0 flex-col bg-[#d9d9d9]">
        <ScrollButton label="Scroll up" d="M7 4l6 6H1z" />
        <div className="h-[308px] border border-[#b4b4b4] bg-white" />
        <div className="flex-1" />
        <ScrollButton label="Scroll down" d="M7 10L1 4h12z" />
      </div>
    </div>
    <div className="flex h-6 shrink-0 items-center bg-[#c4c4c4]">
      <div className="w-[22px]"><ScrollButton label="Scroll left" d="M4 7l6-6v12z" /></div>
      <div className="h-[22px] flex-1 border border-[#aaa] bg-[#f4f4f4]" />
      <div className="w-[52px]" />
      <div className="w-[22px]"><ScrollButton label="Scroll right" d="M10 7L4 1v12z" /></div>
      <div className="w-[25px]" />
    </div>
  </main>
);

/* ---------- player ---------- */

const PlayerOverlay = () => (
  <>
    <div className="pointer-events-none absolute inset-x-0 bottom-[10px] h-[450px] bg-[linear-gradient(to_bottom,rgba(0,0,0,0)_0%,rgba(0,0,0,.02)_8%,rgba(0,0,0,.1)_24%,rgba(0,0,0,.18)_38%,rgba(0,0,0,.26)_57%,rgba(0,0,0,.32)_75%,rgba(0,0,0,.37)_82%,rgba(0,0,0,.54)_88%,rgba(0,0,0,.66)_94%,rgba(0,0,0,.75)_100%)]" />
    <p className="absolute bottom-[275px] left-1/2 h-[54px] -translate-x-1/2 bg-[rgba(8,8,8,.82)] px-[11px] font-['Roboto'] text-[47px] leading-[54px] whitespace-nowrap text-white">
      with the colleagues or other stakeholders.
    </p>
    <div className="absolute inset-x-0 bottom-[100px] flex h-[18px] border-y-4 border-[rgba(32,108,192,.85)] py-[2px]">
      <input
        type="range"
        aria-label="Seek"
        defaultValue={95}
        className="h-[6px] w-full appearance-none bg-[linear-gradient(to_right,#ff0000_94.900%,rgba(255,255,255,.45)_94.900%)] [&::-webkit-slider-thumb]:h-0 [&::-webkit-slider-thumb]:w-0 [&::-webkit-slider-thumb]:appearance-none"
      />
    </div>
    <button aria-label="Pause" className="absolute right-12 bottom-[37px] flex h-[41px] w-[67px] items-center justify-end">
      <span className="h-[27px] w-12 rounded-r-full bg-white/45" />
      <span className="absolute top-0 left-0 flex h-[41px] w-[41px] items-center justify-center gap-[4px] rounded-full bg-[#5e5e5e]">
        <span className="h-[18px] w-[6px] bg-[#f2f2f2]" />
        <span className="h-[18px] w-[6px] bg-[#f2f2f2]" />
      </span>
    </button>
  </>
);

export default function App() {
  return (
    <div className="flex min-h-screen overflow-hidden bg-white p-9 font-['Noto_Sans','Open_Sans',sans-serif]">
      <div className="relative flex min-w-0 flex-1 flex-col overflow-hidden rounded-[36px] bg-black shadow-[0_2px_40px_rgba(0,0,0,0.45)]">
        <div className="h-[2px] shrink-0 bg-[#131313]" />
        <div className="flex flex-1 flex-col pr-[6px] pl-1">
          <TitleBar />
          <Ribbon />
          <div className="flex flex-1 bg-[#e1e1e1]">
            <ProjectBrowser />
            <Splitter />
            <Toolbox />
            <Splitter />
            <Editor />
            <div className="flex w-[41px] shrink-0 items-start pt-[11px]">
              <button className="w-8 text-[16px] leading-8 text-[#444] [writing-mode:vertical-rl]">Start</button>
              <div className="ml-auto h-9 w-[9px] bg-[#cbcbcb]" />
            </div>
          </div>
        </div>
        <div className="h-[10px] shrink-0 bg-[#131313]" />
        <PlayerOverlay />
      </div>
    </div>
  );
}
